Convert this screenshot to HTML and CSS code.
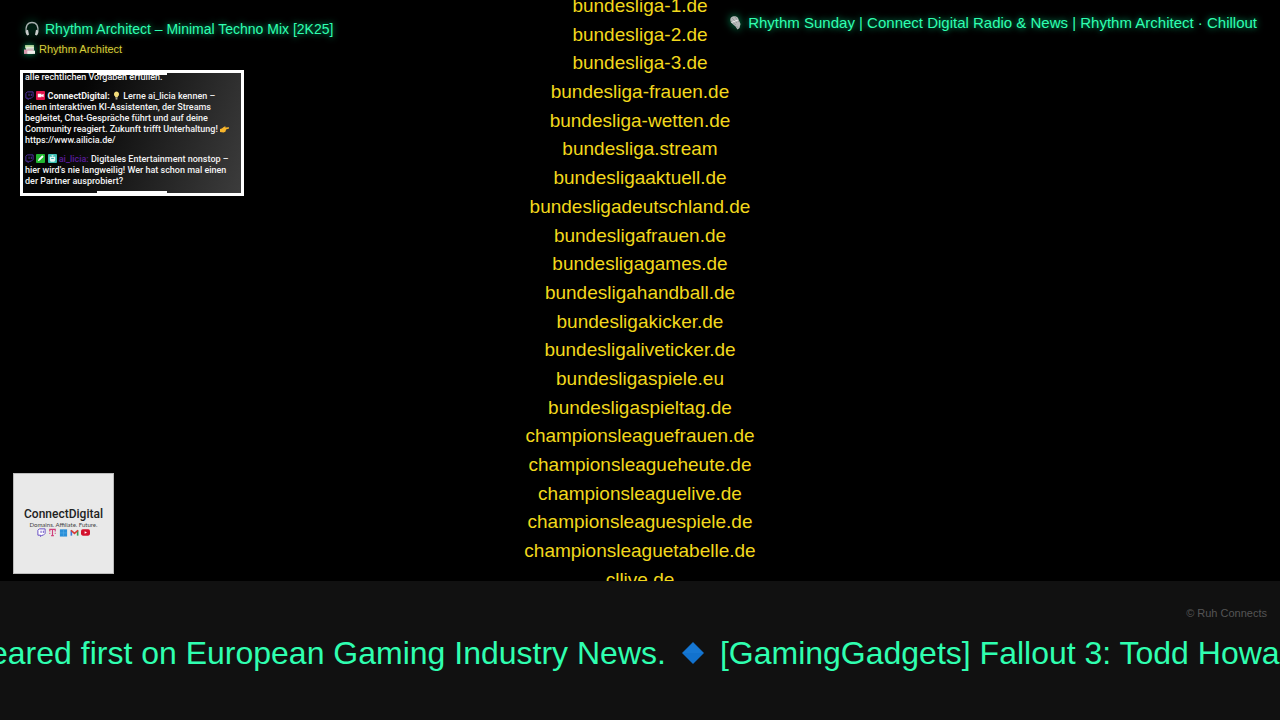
FILE: index.html
```html
<!DOCTYPE html>
<html lang="de">
<head>
  <meta charset="UTF-8">
  <title>Connect Digital Radio</title>
  <link rel="stylesheet" href="styles.css">
</head>
<body>
  <main class="stage">
    <ul class="domains">
      <li>bundesliga-1.de</li>
      <li>bundesliga-2.de</li>
      <li>bundesliga-3.de</li>
      <li>bundesliga-frauen.de</li>
      <li>bundesliga-wetten.de</li>
      <li>bundesliga.stream</li>
      <li>bundesligaaktuell.de</li>
      <li>bundesligadeutschland.de</li>
      <li>bundesligafrauen.de</li>
      <li>bundesligagames.de</li>
      <li>bundesligahandball.de</li>
      <li>bundesligakicker.de</li>
      <li>bundesligaliveticker.de</li>
      <li>bundesligaspiele.eu</li>
      <li>bundesligaspieltag.de</li>
      <li>championsleaguefrauen.de</li>
      <li>championsleagueheute.de</li>
      <li>championsleaguelive.de</li>
      <li>championsleaguespiele.de</li>
      <li>championsleaguetabelle.de</li>
      <li>cllive.de</li>
    </ul>

    <div class="left">
      <div class="track">
        <svg class="track-icon" viewBox="0 0 16 16">
          <path d="M2.500 12C1 5 3.500 1.500 8 1.500S15 5 13.500 12" fill="none" stroke="#aab2b2" stroke-width="1.300"/>
          <path d="M2 9.500l2-.8 1 5-1.500.8C2 14 1.500 11.500 2 9.500zM14 9.500l-2-.8-1 5 1.500.8c1.500-.5 2-3 1.500-5z" fill="#c9cccc"/>
        </svg>
        <span>Rhythm Architect – Minimal Techno Mix [2K25]</span>
      </div>
      <div class="artist">
        <svg class="artist-icon" viewBox="0 0 10 10">
          <rect x="1" y="1" width="8" height="3" fill="#b9dba0"/>
          <rect x="2" y="3" width="7" height="3" fill="#f2f2ee"/>
          <rect x="0" y="5" width="8" height="4" fill="#d79aae"/>
          <rect x="3" y="6" width="7" height="3" fill="#eeeeea"/>
          <path d="M3 4.500h6" stroke="#7d8c7a" stroke-width=".5"/>
        </svg>
        <span>Rhythm Architect</span>
      </div>

      <section class="chat">
        <p>alle rechtlichen Vorgaben erfüllen.</p>
        <p>
          <svg class="badge" viewBox="0 0 10 10"><path d="M1 2.500L2.500 1H9v5L7 8H5L3.500 9.500V8H1zM4.500 3v2.500M7 3v2.500" fill="none" stroke="#5a35b0"/></svg>
          <svg class="badge" viewBox="0 0 10 10"><rect width="10" height="10" rx="1" fill="#e0164c"/><path d="M2 3h4v1.500L8.500 3v4L6 5.800V7H2z" fill="#fff"/></svg>
          <b>ConnectDigital:</b>
          <svg class="badge" viewBox="0 0 10 10"><path d="M5 .5a3 3 0 0 1 1.500 5.500V7h-3V6A3 3 0 0 1 5 .5z" fill="#f3dd7a"/><path d="M4 7h2v2.500H4z" fill="#aaa58f"/></svg>
          Lerne ai_licia kennen – einen interaktiven KI-Assistenten, der Streams begleitet, Chat-Gespräche führt und auf deine Community reagiert. Zukunft trifft Unterhaltung!
          <svg class="badge" viewBox="0 0 10 10"><path d="M10 3.500L6 4V2.500L4.500 3 2 5 0 5.500V9l4 .5L6 8.500 6.800 6 10 5z" fill="#f7b52b"/></svg>
          https://www.ailicia.de/
        </p>
        <p>
          <svg class="badge" viewBox="0 0 10 10"><path d="M1 2.500L2.500 1H9v5L7 8H5L3.500 9.500V8H1zM4.500 3v2.500M7 3v2.500" fill="none" stroke="#5a35b0"/></svg>
          <svg class="badge" viewBox="0 0 10 10"><rect width="10" height="10" rx="1" fill="#22b830"/><path d="M2 8l1-2.500L7 1.500 8.500 3l-4 4z" fill="#fff"/></svg>
          <svg class="badge" viewBox="0 0 10 10"><rect width="10" height="10" rx="1" fill="#3dbfb4"/><path d="M2 3h6v4L7 8.500H3L2 7zM3.500 1.500L5 3l1.500-1.500" fill="#e4f7f5"/><path d="M3.500 5h3" stroke="#3aa"/></svg>
          <b class="bot">ai_licia:</b>
          Digitales Entertainment nonstop – hier wird's nie langweilig! Wer hat schon mal einen der Partner ausprobiert?
        </p>
      </section>

      <div class="logo">
        <div class="logo-name">ConnectDigital</div>
        <div class="logo-claim">Domains. Affiliate. Future.</div>
        <div class="logo-icons">
          <svg viewBox="0 0 10 10"><path d="M1 2.500L2.500 1H9v5L7 8H5.500L4 9.500V8H1zM4.500 3v2.500M7 3v2.500" fill="#fff" stroke="#5b3fc0"/></svg>
          <svg viewBox="0 0 10 10"><path d="M2 4V1.500h6V4M5 1.500v7M3.500 8.500h3M1.500 6h1M7.500 6h1" fill="none" stroke="#d0407c" stroke-width="1.300"/></svg>
          <svg viewBox="0 0 10 10"><path d="M1 1.500h8v8H1z" fill="#2a8fd8"/><path d="M1 5.500h8M5 1.500v8" stroke="#62b4ea" stroke-width=".5"/></svg>
          <svg viewBox="0 0 10 10"><path d="M1.500 8.500V3" stroke="#3f78d8" stroke-width="1.800"/><path d="M8.500 8.500V3" stroke="#3a9b57" stroke-width="1.800"/><path d="M1 2.500l4 3.500 4-3.500" fill="none" stroke="#d83a35" stroke-width="1.800"/></svg>
          <svg viewBox="0 0 10 10"><rect y="1.500" width="10" height="7" rx="2" fill="#d3112d"/><path d="M4 3.500L6.700 5 4 6.500z" fill="#fff"/></svg>
        </div>
      </div>
    </div>

    <div class="show">
      <svg class="show-icon" viewBox="0 0 16 16">
        <path d="M3 2.500C5 .5 9 1 10 3l2.500 6-1 4-2 1.500-2-3L4 8.500C2 6.500 1.800 4 3 2.500z" fill="#b5b8b8"/>
        <path d="M4 3l5 5M7 2l4 5M3 6l5 4M8.500 11l2 2.500" stroke="#8b8f8f" stroke-width=".7"/>
        <path d="M3.500 7.500L10 5" stroke="#eee"/>
      </svg>
      <span>Rhythm Sunday | Connect Digital Radio &amp; News | Rhythm Architect · Chillout</span>
    </div>
  </main>

  <footer class="footer">
    <div class="copyright">© Ruh Connects</div>
    <div class="ticker">
      <span>eared first on European Gaming Industry News.</span>
      <svg class="diamond" viewBox="0 0 24 24">
        <path d="M12 1l11 11-11 11L1 12z" fill="#1272ce"/>
        <path d="M12 2l10 10H2z" fill="#1778d4"/>
      </svg>
      <span>[GamingGadgets] Fallout 3: Todd Howa</span>
    </div>
  </footer>
</body>
</html>
```

FILE: styles.css
```css
* {
  box-sizing: border-box;
}

body {
  margin: 0;
  height: 100vh;
  display: flex;
  flex-direction: column;
  background: #000;
  color: #2fffb0;
  font-family: "Liberation Sans", Arial, sans-serif;
  overflow: hidden;
}

.stage {
  flex: 1;
  min-height: 0;
  display: grid;
  grid-template-columns: 1fr 1fr;
  grid-template-rows: 100%;
  overflow: hidden;
}

.domains {
  grid-column: 1 / -1;
  grid-row: 1;
  display: flex;
  flex-direction: column;
  justify-content: space-between;
  margin: -8px 0 -13px;
  padding: 0;
  list-style: none;
  text-align: center;
  font-size: 19px;
  line-height: 28px;
  color: #f2d81c;
}

.left {
  grid-column: 1;
  grid-row: 1;
  display: flex;
  flex-direction: column;
  align-items: flex-start;
  padding: 20px 13px 7px;
}

.track,
.artist,
.show {
  display: flex;
  align-items: center;
  text-shadow: 0 0 6px #00c880;
  white-space: nowrap;
}

.track {
  gap: 5px;
  margin-left: 11px;
  font-size: 14px;
  line-height: 18px;
}

.track-icon,
.show-icon {
  width: 16px;
  height: 16px;
  filter: drop-shadow(0 0 4px #00a060);
}

.artist {
  gap: 4px;
  margin-left: 11px;
  font-size: 11px;
  line-height: 22px;
  color: #d6cf3c;
  text-shadow: 0 0 5px #443c00;
}

.artist-icon {
  width: 11px;
  height: 11px;
  filter: drop-shadow(0 0 3px #00a060);
}

.chat {
  position: relative;
  display: flex;
  flex-direction: column;
  justify-content: flex-end;
  gap: 8px;
  width: 224px;
  height: 126px;
  margin: 10px 0 0 7px;
  padding: 2px 2px 6px;
  border: 3px solid #fff;
  background: linear-gradient(110deg, #050505 25%, #3c3c3c);
  color: #f2f2f2;
  font: 500 9px/11px Roboto, sans-serif;
  overflow: hidden;
}

/* thicker middle part of the frame */
.chat::before,
.chat::after {
  content: "";
  position: absolute;
  left: 34%;
  width: 32%;
  height: 2px;
  background: #fff;
}

.chat::before {
  top: 0;
}

.chat::after {
  bottom: 0;
}

.chat p {
  margin: 0;
}

.chat .bot {
  color: #5a1c9c;
  font-weight: 500;
}

.badge {
  width: 9px;
  height: 9px;
  vertical-align: -1px;
}

.logo {
  display: flex;
  flex-direction: column;
  align-items: center;
  width: 101px;
  height: 101px;
  margin-top: auto;
  padding-top: 32px;
  border: 1px solid #bbb;
  background: #e9e9e9;
  color: #222;
}

.logo-name {
  font: 500 12px/16px Roboto, sans-serif;
}

.logo-claim {
  font: 6px/6px Lato, sans-serif;
  color: #444;
}

.logo-icons {
  display: flex;
  gap: 2px;
}

.logo-icons svg {
  width: 9px;
  height: 9px;
}

.show {
  grid-column: 2;
  grid-row: 1;
  align-self: start;
  justify-self: end;
  gap: 4px;
  padding: 14px 23px 0 0;
  font-size: 15px;
  line-height: 18px;
}

.footer {
  height: 139px;
  padding-top: 24px;
  background: #111;
}

.copyright {
  padding-right: 13px;
  text-align: right;
  font-size: 11px;
  line-height: 16px;
  color: #555;
}

/* the text runs in from the left edge */
.ticker {
  display: flex;
  align-items: center;
  margin: 12px 0 0 -10px;
  font-size: 32px;
  line-height: 40px;
  white-space: nowrap;
  overflow: hidden;
}

.diamond {
  flex: none;
  width: 24px;
  height: 24px;
  margin: 0 15px;
}
```
